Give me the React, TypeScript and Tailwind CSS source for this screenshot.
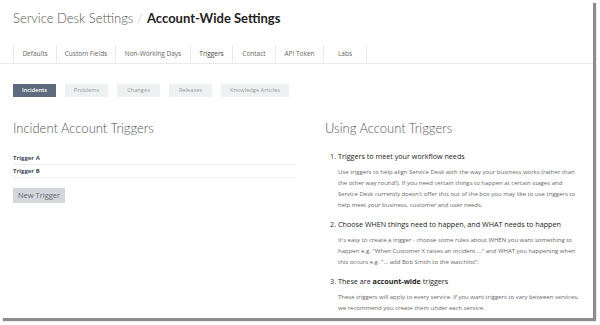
import React from 'react';

const tabs = [
  { label: 'Defaults', w: 'w-[43px]' },
  { label: 'Custom Fields', w: 'w-[59px]' },
  { label: 'Non-Working Days', w: 'w-[75px]' },
  { label: 'Triggers', w: 'w-[42px]', active: true },
  { label: 'Contact', w: 'w-[43px]' },
  { label: 'API Token', w: 'w-[48px]' },
  { label: 'Labs', w: 'w-[44px]' },
];

const subTabs = [
  { label: 'Incidents', w: 'w-[43px]', active: true },
  { label: 'Problems', w: 'w-[43px]' },
  { label: 'Changes', w: 'w-[43px]' },
  { label: 'Releases', w: 'w-[43px]' },
  { label: 'Knowledge Articles', w: 'w-[68px]' },
];

const steps = [
  {
    title: <>Triggers to meet your workflow needs</>,
    lines: [
      'Use triggers to help align Service Desk with the way your business works (rather than',
      'the other way round!). If you need certain things to happen at certain stages and',
      "Service Desk currently doesn't offer this out of the box you may like to use triggers to",
      'help meet your business, customer and user needs.',
    ],
  },
  {
    title: <>Choose WHEN things need to happen, and WHAT needs to happen</>,
    lines: [
      "It's easy to create a trigger - choose some rules about WHEN you want something to",
      'happen e.g. "When Customer X raises an incident ..." and WHAT you happening when',
      'this occurs e.g. "... add Bob Smith to the watchlist".',
    ],
  },
  {
    title: <>These are <span className="font-bold">account-wide</span> triggers</>,
    lines: [
      'These triggers will apply to every service. If you want triggers to vary between services,',
      'we recommend you create them under each service.',
    ],
  },
];

const heading = { fontFamily: 'Lato, "Open Sans", sans-serif' };

export default function App() {
  return (
    <div className="w-[600px] h-[325px] bg-white" style={{ fontFamily: '"Open Sans", "Noto Sans", sans-serif' }}>
      <div className="w-[593px] h-[318px] bg-white shadow-[3px_3px_1px_rgba(0,0,0,0.45)] flex flex-col">
        {/* Title */}
        <div className="px-[13px] pt-[9px] h-[45px] text-[13px] leading-[18px] text-[#222] whitespace-nowrap" style={heading}>
          <span className="font-light text-[#555]">Service Desk Settings</span>
          <span className="font-light text-[#bbb] mx-[4px]">/</span>
          <span className="font-bold">Account-Wide Settings</span>
        </div>

        {/* Tabs */}
        <div className="flex h-[19px] border-b border-[#e8eaec] pl-[13px]">
          {tabs.map((t, i) => (
            <div
              key={t.label}
              className={`${t.w} flex items-center justify-center border-l border-[#e8eaec] text-[6.5px] whitespace-nowrap ${i === tabs.length - 1 ? 'border-r' : ''} ${t.active ? 'text-[#444]' : 'text-[#666]'}`}
            >
              {t.label}
            </div>
          ))}
        </div>

        {/* Sub tabs */}
        <div className="flex gap-[9px] pl-[13px] mt-[20px]">
          {subTabs.map((s) => (
            <div
              key={s.label}
              className={`${s.w} h-[13px] flex items-center justify-center text-[5.7px] whitespace-nowrap ${s.active ? 'bg-[#5e6a7d] text-white font-semibold' : 'bg-[#eef1f2] text-[#999]'}`}
            >
              {s.label}
            </div>
          ))}
        </div>

        {/* Columns */}
        <div className="flex pl-[13px] mt-[22px]">
          <div className="w-[283px]">
            <h2 className="text-[13px] leading-[18px] font-light text-[#555]" style={heading}>Incident Account Triggers</h2>
            <div className="mt-[15px]">
              {['Trigger A', 'Trigger B'].map((t) => (
                <div key={t} className="h-[13px] flex items-center border-b border-[#eceeef] text-[6px] font-bold text-[#3b4a5c]">
                  {t}
                </div>
              ))}
            </div>
            <button className="mt-[10px] w-[52px] h-[15px] bg-[#d3d7dc] text-[7.5px] text-[#666] flex items-center justify-center">
              New Trigger
            </button>
          </div>

          <div className="ml-[29px] w-[260px]">
            <h2 className="text-[13px] leading-[18px] font-light text-[#555]" style={heading}>Using Account Triggers</h2>
            <ol className="mt-[13px] flex flex-col gap-[7px]">
              {steps.map((s, i) => (
                <li key={i} className="flex pl-[5px]">
                  <span className="w-[8px] text-[7.2px] leading-[12px] text-[#333]">{i + 1}.</span>
                  <div>
                    <div className="text-[7.2px] leading-[12px] text-[#222] font-medium">{s.title}</div>
                    <div className="mt-[5px] text-[6px] leading-[11px] text-[#666] whitespace-nowrap">
                      {s.lines.map((l, j) => (
                        <div key={j}>{l}</div>
                      ))}
                    </div>
                  </div>
                </li>
              ))}
            </ol>
          </div>
        </div>
      </div>
    </div>
  );
}
